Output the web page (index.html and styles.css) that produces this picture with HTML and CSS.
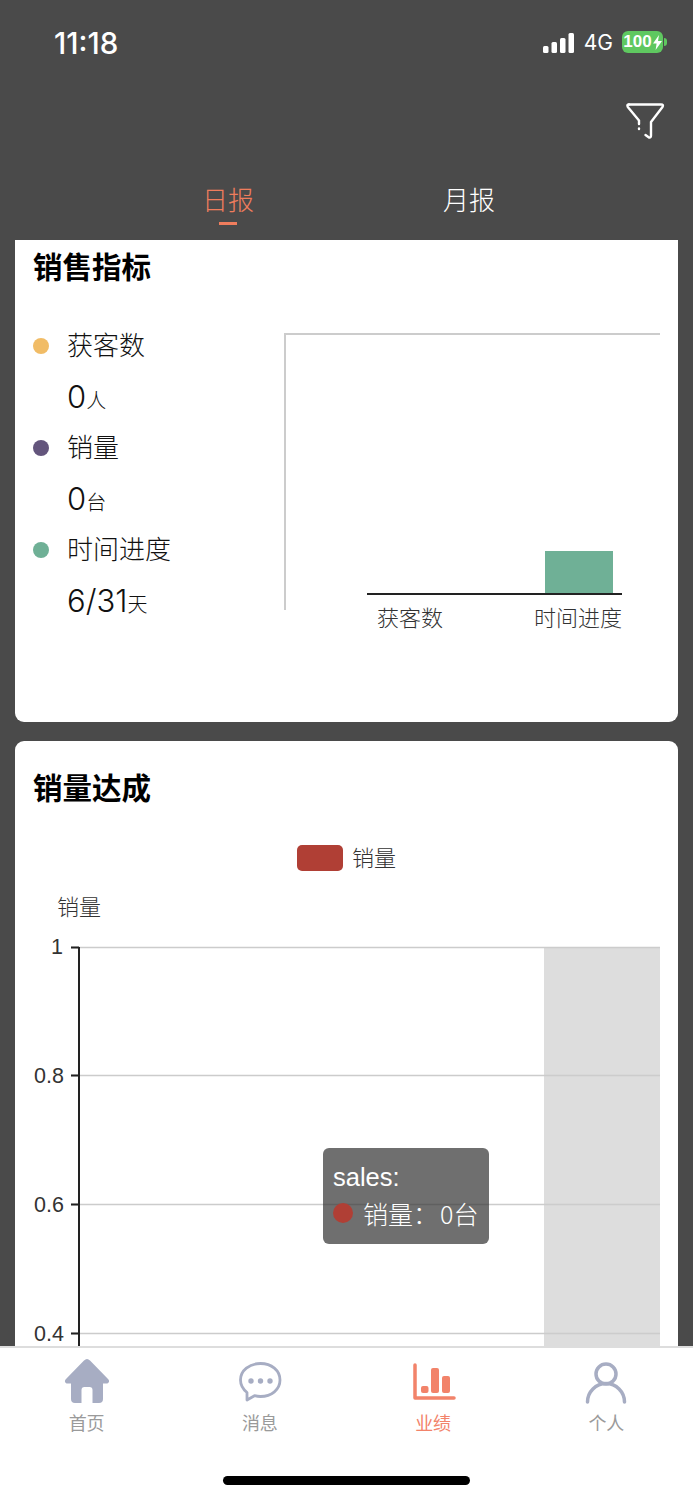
FILE: index.html
```html
<!DOCTYPE html>
<html lang="zh-CN">

<head>
    <meta charset="UTF-8">
    <meta name="viewport" content="width=device-width, initial-scale=1.0">
    <title>业绩</title>
    <link rel="stylesheet" href="styles.css">
</head>

<body>
    <div class="phone">
        <header class="top">
            <div class="status">
                <span class="time">11:18</span>
                <div class="status-right">
                    <svg class="signal" width="32" height="20" viewBox="0 0 32 20">
                        <rect x="0" y="13" width="5.5" height="7" rx="1.5" />
                        <rect x="8.5" y="9" width="5.5" height="11" rx="1.5" />
                        <rect x="17" y="5" width="5.5" height="15" rx="1.5" />
                        <rect x="25.5" y="0" width="5.5" height="20" rx="1.5" />
                    </svg>
                    <span class="net">4G</span>
                    <div class="battery">
                        <span class="battery-num">100</span>
                        <svg width="9" height="15" viewBox="0 0 9 15">
                            <path d="M6 0 L0 8.5 H3.6 L2.6 15 L9 6 H5 Z" fill="#fff" />
                        </svg>
                    </div>
                    <span class="battery-nub"></span>
                </div>
            </div>

            <div class="filter-row">
                <svg width="40" height="40" viewBox="0 0 40 40" fill="none" stroke="#fff" stroke-width="2.4"
                    stroke-linecap="round" stroke-linejoin="round">
                    <path d="M4 2.5 H36 Q39 2.5 37.5 5 L26 20 V33.5 Q26 36 24 35.5 L20.5 33" />
                    <path d="M2.8 5 Q1.5 2.5 4 2.5 M2.8 5 L14 18.5 V22" />
                    <path d="M14 26.5 V27" />
                </svg>
            </div>

            <nav class="tabs">
                <div class="tab tab-on">日报<span class="tab-line"></span></div>
                <div class="tab">月报</div>
            </nav>
        </header>

        <main class="content">
            <section class="card card-first">
                <h2 class="card-title">销售指标</h2>
                <div class="card-row">
                    <ul class="legend">
                        <li class="legend-name"><i class="dot dot-yellow"></i>获客数</li>
                        <li class="legend-val">0<small>人</small></li>
                        <li class="legend-name"><i class="dot dot-purple"></i>销量</li>
                        <li class="legend-val">0<small>台</small></li>
                        <li class="legend-name"><i class="dot dot-green"></i>时间进度</li>
                        <li class="legend-val">6/31<small>天</small></li>
                    </ul>
                    <svg class="chart-small" width="376" height="310" viewBox="284 333 376 310">
                        <path d="M285 610 V334 H660" fill="none" stroke="#ccc" stroke-width="2" />
                        <rect x="545" y="551" width="68" height="43" fill="#6fb096" />
                        <path d="M367 594 H622" stroke="#222" stroke-width="2" />
                        <text class="chart-label" x="410" y="626" text-anchor="middle">获客数</text>
                        <text class="chart-label" x="578" y="626" text-anchor="middle">时间进度</text>
                    </svg>
                </div>
            </section>

            <section class="card">
                <h2 class="card-title card-title-2">销量达成</h2>
                <div class="chart-wrap">
                    <svg class="chart-big" width="663" height="560" viewBox="15 815 663 560">
                        <rect x="544" y="947" width="116" height="420" fill="#ddd" />
                        <rect x="297" y="845" width="46" height="26" rx="5" fill="#b03f35" />
                        <text class="chart-label" x="352" y="866">销量</text>
                        <text class="chart-label" x="57" y="915">销量</text>
                        <path d="M71 947.5 H660 M71 1075.5 H660 M71 1204.5 H660 M71 1333.5 H660" stroke="#ccc"
                            stroke-width="1.5" />
                        <path d="M71 947.5 H79 M71 1075.5 H79 M71 1204.5 H79 M71 1333.5 H79 M79 947 V1367"
                            stroke="#222" stroke-width="2" fill="none" />
                        <text class="chart-num" x="63" y="954" text-anchor="end">1</text>
                        <text class="chart-num" x="64" y="1083" text-anchor="end">0.8</text>
                        <text class="chart-num" x="64" y="1212" text-anchor="end">0.6</text>
                        <text class="chart-num" x="64" y="1341" text-anchor="end">0.4</text>
                    </svg>
                    <div class="tooltip">
                        <div class="tooltip-head">sales:</div>
                        <div class="tooltip-row"><i class="tooltip-dot"></i>销量：<span class="tooltip-val">0台</span></div>
                    </div>
                </div>
            </section>
        </main>

        <footer class="tabbar">
            <div class="tabbar-items">
                <div class="tabbar-item">
                    <svg width="48" height="48" viewBox="0 0 48 48">
                        <path fill="#a7adc3"
                            d="M24 2 C23 2 22 2.5 21 3.5 L3 22 C1 24 2 26.500 4.500 26.500 H8 V42 A4 4 0 0 0 12 46 H18.500 V33 A3 3 0 0 1 21.500 30 H26.500 A3 3 0 0 1 29.500 33 V46 H36 A4 4 0 0 0 40 42 V26.500 H43.500 C46 26.500 47 24 45 22 L27 3.500 C26 2.500 25 2 24 2 Z" />
                    </svg>
                    <span>首页</span>
                </div>
                <div class="tabbar-item">
                    <svg width="48" height="48" viewBox="0 0 48 48">
                        <path fill="none" stroke="#a7adc3" stroke-width="2.800" stroke-linejoin="round"
                            d="M24.500 6.500 C13.500 6.500 4.500 13.500 4.500 23 C4.500 29 8 33 11 35.500 L11 43 L18.500 38.700 C20.500 39.200 22.500 39.500 24.500 39.500 C35.500 39.500 44 32.500 44 23 C44 13.500 35.500 6.500 24.500 6.500 Z" />
                        <circle cx="15" cy="24" r="2.700" fill="#a7adc3" />
                        <circle cx="24.500" cy="24" r="2.700" fill="#a7adc3" />
                        <circle cx="34" cy="24" r="2.700" fill="#a7adc3" />
                    </svg>
                    <span>消息</span>
                </div>
                <div class="tabbar-item tabbar-on">
                    <svg width="48" height="48" viewBox="0 0 48 48">
                        <path fill="none" stroke="#f2836a" stroke-width="3.500" stroke-linecap="round"
                            stroke-linejoin="round" d="M6 8 V41 H45" />
                        <rect x="12" y="29" width="7.500" height="7" rx="2" fill="#f2836a" />
                        <rect x="22" y="11" width="8" height="25" rx="2" fill="#f2836a" />
                        <rect x="33" y="19" width="8" height="17" rx="2" fill="#f2836a" />
                    </svg>
                    <span>业绩</span>
                </div>
                <div class="tabbar-item">
                    <svg width="48" height="48" viewBox="0 0 48 48" fill="none" stroke="#a7adc3" stroke-width="3.500"
                        stroke-linecap="round">
                        <circle cx="24" cy="17" r="10" />
                        <path d="M5.500 45 A18.500 18.500 0 0 1 42.500 45" />
                    </svg>
                    <span>个人</span>
                </div>
            </div>
            <div class="home-bar"></div>
        </footer>
    </div>
</body>

</html>
```

FILE: styles.css
```css
* {
    padding: 0;
    margin: 0;
    box-sizing: border-box;
}

body {
    font-family: "Liberation Sans", "Noto Sans CJK SC", sans-serif;
    background: #4a4a4a;
}

.phone {
    display: flex;
    flex-direction: column;
    width: 693px;
    height: 1500px;
    overflow: hidden;
}

/* top bar */
.top {
    flex: none;
    height: 240px;
    color: #fff;
}

.status {
    display: flex;
    justify-content: space-between;
    align-items: center;
    height: 84px;
    padding: 0 26px 0 54px;
}

.time {
    font-family: Inter, sans-serif;
    font-size: 29.5px;
    font-weight: 500;
    padding-top: 2px;
}

.status-right {
    display: flex;
    align-items: center;
}

.signal {
    fill: #fff;
    margin: 2px 9px 0 0;
}

.net {
    font-family: Inter, sans-serif;
    font-size: 21px;
    margin-right: 9px;
}

.battery {
    display: flex;
    align-items: center;
    justify-content: center;
    gap: 1px;
    width: 41px;
    height: 22px;
    border-radius: 6px;
    background: #5fc860;
}

.battery-num {
    font-size: 17px;
    font-weight: bold;
}

.battery-nub {
    width: 3px;
    height: 8px;
    border-radius: 0 3px 3px 0;
    background: #5fc860;
    margin-left: 1px;
}

.filter-row {
    display: flex;
    justify-content: flex-end;
    padding: 18px 28px 0 0;
}

.tabs {
    display: flex;
    gap: 1px;
    margin: 38px 0 0 108px;
}

.tab {
    width: 240px;
    display: flex;
    flex-direction: column;
    align-items: center;
    font-family: "Noto Sans CJK SC", sans-serif;
    font-weight: 300;
    font-size: 26px;
    line-height: 38px;
}

.tab-on {
    color: #ef7d5d;
}

.tab-line {
    width: 18px;
    height: 3px;
    margin-top: 4px;
    background: #ef7d5d;
}

/* cards */
.content {
    flex: 1;
    overflow: hidden;
    padding: 0 15px;
}

.card {
    background: #fff;
    border-radius: 9px;
    height: 720px;
    margin-bottom: 19px;
}

.card-first {
    height: 482px;
    border-radius: 0 0 9px 9px;
}

.card-title {
    font-family: "Noto Sans CJK SC", sans-serif;
    font-size: 29.5px;
    font-weight: bold;
    line-height: 50px;
    padding-left: 18px;
    color: #000;
}

.card-title-2 {
    padding-top: 20px;
    height: 74px;
}

.card-row {
    display: flex;
    justify-content: space-between;
    padding: 30px 18px 0 18px;
}

.legend {
    list-style: none;
    font-family: "Noto Sans CJK SC", sans-serif;
    font-weight: 300;
    color: #111;
}

.legend-name {
    display: flex;
    align-items: center;
    height: 51px;
    padding-bottom: 4px;
    font-size: 26px;
}

.legend-val {
    height: 51px;
    line-height: 51px;
    padding-left: 34px;
    font-family: Inter, "Noto Sans CJK SC", sans-serif;
    font-size: 31px;
}

.legend-val small {
    font-family: "Noto Sans CJK SC", sans-serif;
    font-size: 20px;
}

.dot {
    flex: none;
    width: 16px;
    height: 16px;
    margin: 4px 18px 0 0;
    border-radius: 50%;
}

.dot-yellow {
    background: #f1bc66;
}

.dot-purple {
    background: #63557c;
}

.dot-green {
    background: #6fb096;
}

.chart-small {
    margin-top: 13px;
}

.chart-label {
    font-family: "Noto Sans CJK SC", sans-serif;
    font-weight: 300;
    font-size: 22px;
    fill: #333;
}

.chart-num {
    font-size: 21.5px;
    fill: #333;
}

.chart-wrap {
    position: relative;
}

.chart-big {
    display: block;
}

.tooltip {
    position: absolute;
    left: 308px;
    top: 333px;
    width: 166px;
    height: 96px;
    padding: 11px 10px 0;
    border-radius: 6px;
    background: rgba(50, 50, 50, 0.7);
    color: #fff;
    font-size: 25.5px;
    line-height: 36px;
}

.tooltip-row {
    display: flex;
    align-items: center;
    font-family: "Noto Sans CJK SC", sans-serif;
    font-weight: 300;
    font-size: 25px;
    white-space: nowrap;
}

.tooltip-val {
    margin-left: 2px;
}

.tooltip-dot {
    flex: none;
    width: 20px;
    height: 20px;
    margin-right: 10px;
    border-radius: 50%;
    background: #b03f35;
}

/* bottom bar */
.tabbar {
    flex: none;
    height: 154px;
    background: #fff;
    border-top: 2px solid #ddd;
}

.tabbar-items {
    display: grid;
    grid-template-columns: repeat(4, 1fr);
    padding-top: 9px;
}

.tabbar-item {
    display: flex;
    flex-direction: column;
    align-items: center;
    font-family: "Noto Sans CJK SC", sans-serif;
    font-size: 18px;
    line-height: 24px;
    color: #9a9a9a;
}

.tabbar-item span {
    margin-top: 5px;
}

.tabbar-on {
    color: #f2836a;
}

.home-bar {
    width: 247px;
    height: 9px;
    margin: 42px auto 0;
    border-radius: 5px;
    background: #000;
}
```
